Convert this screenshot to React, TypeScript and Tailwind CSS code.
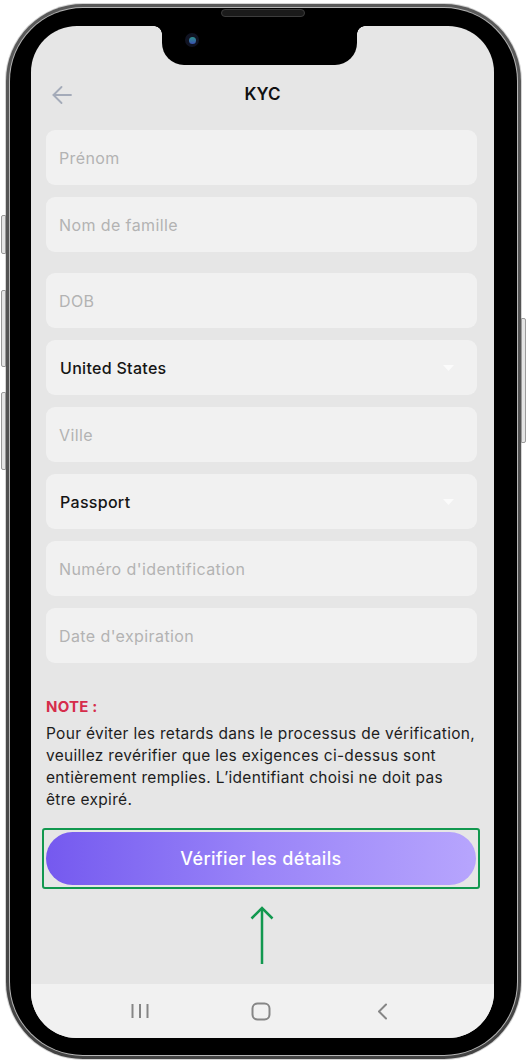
import React from "react";

const font = { fontFamily: "Inter, 'Noto Sans', sans-serif" };

function Field({ label, value, dropdown }: { label?: string; value?: string; dropdown?: boolean }) {
  return (
    <div className="h-[55px] rounded-[9px] bg-[#f1f1f1] flex items-center pl-[13px] pr-[23px]">
      {value ? (
        <span className="flex-1 pl-[1px] text-[16px] font-medium text-[#151515] tracking-[0.3px]">{value}</span>
      ) : (
        <span className="flex-1 text-[16px] text-[#b3b3b3] tracking-[0.4px]">{label}</span>
      )}
      {dropdown && (
        <svg width="11" height="6" viewBox="0 0 11 6">
          <path d="M0 0 L11 0 L5.5 6 Z" fill="#fbfbfb" />
        </svg>
      )}
    </div>
  );
}

export default function App() {
  return (
    <div className="w-[527px] h-[1063px] bg-white relative overflow-hidden" style={font}>
      {/* side buttons */}
      <div className="absolute left-[1px] top-[215px] w-[5px] h-[39px] rounded-l-[2px] border border-[#9a9a9a] bg-[#e4e4e4]" />
      <div className="absolute left-[1px] top-[290px] w-[5px] h-[77px] rounded-l-[2px] border border-[#9a9a9a] bg-[#e4e4e4]" />
      <div className="absolute left-[1px] top-[392px] w-[5px] h-[78px] rounded-l-[2px] border border-[#9a9a9a] bg-[#e4e4e4]" />
      <div className="absolute right-[1px] top-[318px] w-[5px] h-[125px] rounded-r-[2px] border border-[#9a9a9a] bg-[#e4e4e4]" />

      <div className="ml-[5px] pt-[3px]">
        <div className="w-[517px] h-[1057px] rounded-[78px] bg-[#d4d4d4] p-[1px]">
          <div className="h-full rounded-[77px] bg-gradient-to-b from-[#5a5a5a] to-[#444] p-[3px]">
            <div className="h-full rounded-[74px] bg-[#b5b5b5] p-[1px]">
              <div className="h-full rounded-[73px] bg-black pt-[18px] pb-[17px] pl-[21px] pr-[23px] relative flex">
                {/* speaker */}
                <div className="absolute top-[1px] left-[211px] w-[84px] h-[8px] rounded-full bg-[#1a1a1a] border border-[#3c3c3c]" />
                {/* screen */}
                <div className="flex-1 rounded-[46px] bg-[#e6e6e6] overflow-hidden relative flex flex-col">
                  {/* notch */}
                  <div className="absolute top-0 left-[131px] w-[195px] h-[39px] bg-black rounded-b-[22px]">
                    <div className="absolute -left-[8px] top-0 w-[8px] h-[8px] bg-[radial-gradient(circle_at_0%_100%,transparent_7.5px,black_8px)]" />
                    <div className="absolute -right-[8px] top-0 w-[8px] h-[8px] bg-[radial-gradient(circle_at_100%_100%,transparent_7.5px,black_8px)]" />
                    <div className="absolute left-[23px] top-[7px] w-[14px] h-[14px] rounded-full bg-[#101322] flex items-center justify-center">
                      <div className="w-[7px] h-[7px] rounded-full bg-gradient-to-b from-[#2f8f8a] to-[#3a4fb0]" />
                    </div>
                  </div>

                  {/* header */}
                  <div className="mt-[55px] h-[28px] flex items-center">
                    <div className="ml-[21px] w-[20px] flex items-center">
                      <svg width="20" height="18" viewBox="0 0 20 18" fill="none" stroke="#a4abb9" strokeWidth="1.8" strokeLinecap="round" strokeLinejoin="round">
                        <path d="M19 9 H1.5" />
                        <path d="M9.5 1 L1.5 9 L9.5 17" />
                      </svg>
                    </div>
                    <div className="flex-1 text-center text-[17px] font-semibold text-[#111]">KYC</div>
                    <div className="mr-[21px] w-[20px]" />
                  </div>

                  {/* form */}
                  <div className="mt-[21px] pl-[15px] pr-[17px] flex flex-col">
                    <div className="flex flex-col gap-[12px]">
                      <Field label="Prénom" />
                      <Field label="Nom de famille" />
                      <div className="mt-[9px]">
                        <Field label="DOB" />
                      </div>
                      <Field value="United States" dropdown />
                      <Field label="Ville" />
                      <Field value="Passport" dropdown />
                      <Field label="Numéro d'identification" />
                      <Field label="Date d'expiration" />
                    </div>

                    <div className="mt-[34px] text-[15px] leading-[20px] font-bold text-[#d62d4b] tracking-[0.2px]">NOTE :</div>
                    <p className="mt-[6px] text-[15.5px] leading-[22px] text-[#1d1d1d] tracking-[0.3px] whitespace-nowrap">
                      Pour éviter les retards dans le processus de vérification,
                      <br />
                      veuillez revérifier que les exigences ci-dessus sont
                      <br />
                      entièrement remplies. L’identifiant choisi ne doit pas
                      <br />
                      être expiré.
                    </p>

                    <div className="mt-[17px] -ml-[4px] -mr-[3px] border-2 border-[#12984f] rounded-[3px] p-[2px]">
                      <button className="w-full h-[53px] rounded-full bg-gradient-to-r from-[#7559ef] via-[#9a84f8] to-[#b7a5fd] text-white text-[18px] font-medium tracking-[0.35px]">
                        Vérifier les détails
                      </button>
                    </div>

                    <div className="mt-[17px] flex justify-center">
                      <svg width="26" height="60" viewBox="0 0 26 60" fill="none" stroke="#12984f" strokeWidth="2.5" strokeLinecap="butt" strokeLinejoin="miter">
                        <path d="M13 2 V58" />
                        <path d="M2.5 12.5 L13 2 L23.5 12.5" />
                      </svg>
                    </div>
                  </div>

                  <div className="flex-1" />

                  {/* nav bar */}
                  <div className="h-[54px] bg-[#f1f1f1] flex items-center justify-center gap-[81px] pr-[3px]">
                    <div className="w-[40px] flex justify-center">
                      <svg width="20" height="16" viewBox="0 0 20 16" fill="none" stroke="#868686" strokeWidth="2">
                        <path d="M2.5 1 V15 M10 1 V15 M17.5 1 V15" />
                      </svg>
                    </div>
                    <div className="w-[40px] flex justify-center">
                      <svg width="20" height="19" viewBox="0 0 20 19" fill="none" stroke="#868686" strokeWidth="2">
                        <rect x="1.5" y="1.5" width="17" height="16" rx="5" />
                      </svg>
                    </div>
                    <div className="w-[40px] flex justify-center">
                      <svg width="14" height="17" viewBox="0 0 14 17" fill="none" stroke="#868686" strokeWidth="2" strokeLinecap="round" strokeLinejoin="round">
                        <path d="M11 1.5 L4 8.5 L11 15.5" />
                      </svg>
                    </div>
                  </div>
                </div>
              </div>
            </div>
          </div>
        </div>
      </div>
    </div>
  );
}
